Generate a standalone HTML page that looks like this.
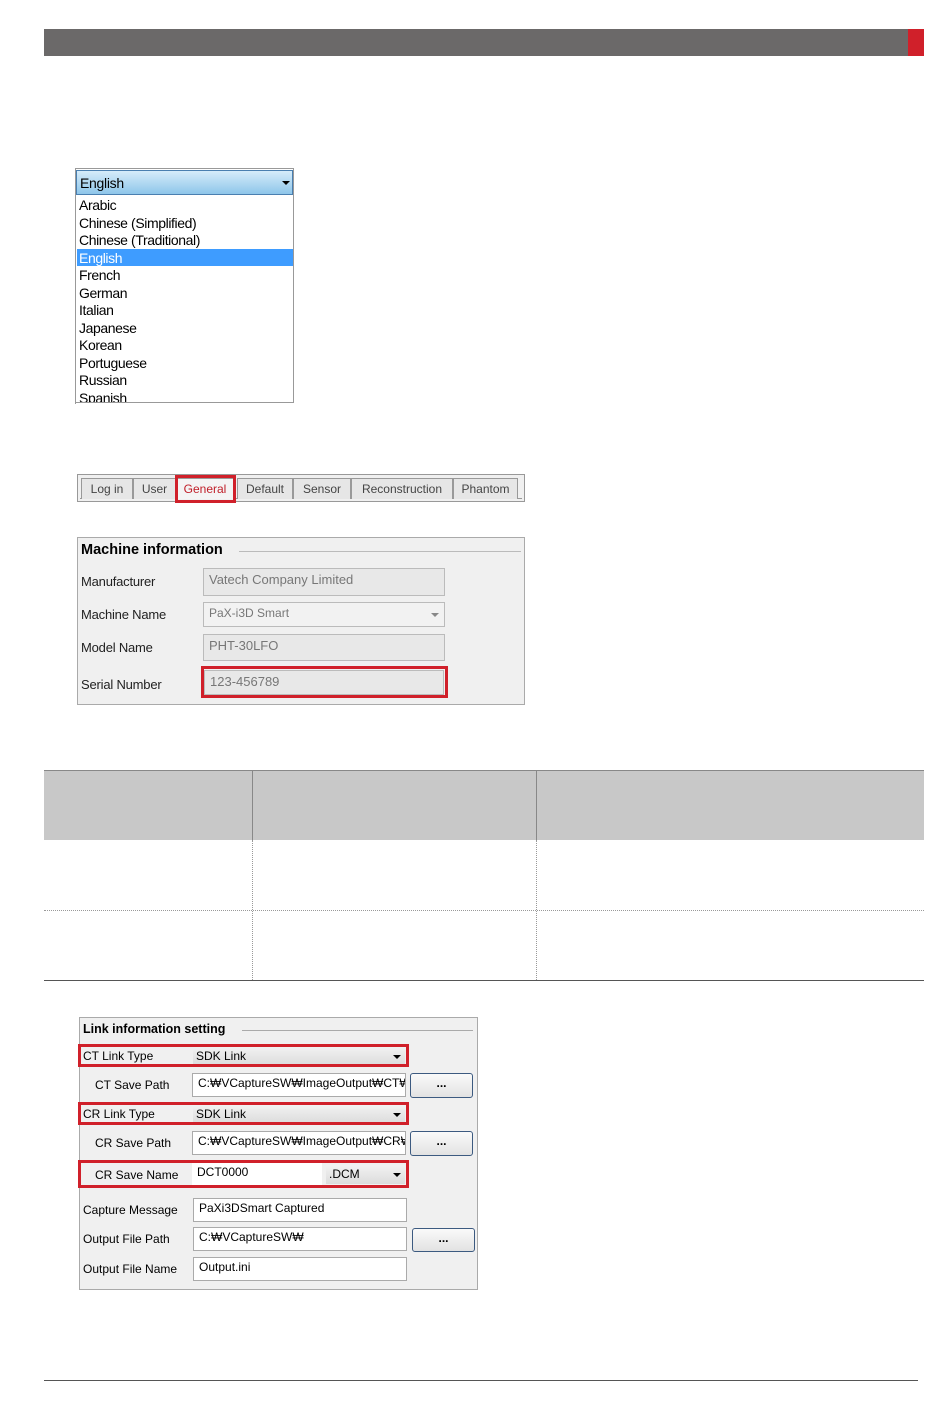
<!DOCTYPE html>
<html><head><meta charset="utf-8"><style>
body{margin:0;width:950px;height:1406px;background:#fff;position:relative;font-family:"Liberation Sans",sans-serif;overflow:hidden}
.a{position:absolute;box-sizing:border-box}
.t{position:absolute;white-space:nowrap}
.red{position:absolute;box-sizing:border-box;border:3px solid #d0202a}
.inp{position:absolute;box-sizing:border-box;background:#fff;border:1px solid #aaa;font-size:12px;padding:2px 0 0 5px;white-space:nowrap;overflow:hidden}
.dis{position:absolute;box-sizing:border-box;background:#e8e8e8;border:1px solid #bbb;font-size:13px;color:#777;padding:3px 0 0 5px}
.btn{position:absolute;box-sizing:border-box;border:1px solid #3c5a80;border-radius:3px;background:linear-gradient(#fafafa,#e2e2e2);font-size:12px;text-align:center;font-weight:bold;line-height:18px}
.cmb{position:absolute;box-sizing:border-box;background:linear-gradient(#f2f2f2,#dcdcdc);font-size:12px;padding:2px 0 0 3px}
.arr{position:absolute;width:0;height:0;border-left:4px solid transparent;border-right:4px solid transparent;border-top:4px solid #000}
.tab{position:absolute;top:478px;height:21px;border:1px solid #999;border-bottom:none;background:#e6e6e6;font-size:12px;color:#444;text-align:center;line-height:20px;box-sizing:border-box}
</style></head><body>
<div class="a" style="left:44px;top:29px;width:880px;height:27px;background:#6b6969"></div>
<div class="a" style="left:908px;top:29px;width:16px;height:27px;background:#d0202a"></div>

<div class="a" style="left:75px;top:168px;width:219px;height:236px;border:1px solid #999;background:#fff"></div>
<div class="a" style="left:76px;top:170px;width:217px;height:25px;background:linear-gradient(#d6ecfa,#8ec6ea);border:1px solid #4a7fb0"></div>
<div class="t" style="left:80px;top:175px;font-size:14px;letter-spacing:-0.3px">English</div>
<div class="arr" style="left:282px;top:181px"></div>
<div class="a" style="left:77px;top:249px;width:216px;height:17px;background:#3e9cff"></div>
<div class="t" style="left:79px;top:197px;font-size:14px;line-height:17.5px;letter-spacing:-0.4px">Arabic<br>Chinese (Simplified)<br>Chinese (Traditional)<br><span style="color:#fff">English</span><br>French<br>German<br>Italian<br>Japanese<br>Korean<br>Portuguese<br>Russian<br>Spanish</div>
<div class="a" style="left:76px;top:403px;width:218px;height:10px;background:#fff"></div>
<div class="a" style="left:75px;top:402px;width:219px;height:1px;background:#999"></div>

<div class="a" style="left:77px;top:474px;width:448px;height:28px;border:1px solid #999;background:#f0f0f0"></div>
<div class="a" style="left:80px;top:498px;width:442px;height:1px;background:#999"></div>
<div class="tab" style="left:81px;width:52px">Log in</div>
<div class="tab" style="left:133px;width:43px">User</div>
<div class="tab" style="left:176px;width:58px;color:#c0202a;background:#f4f4f4">General</div>
<div class="red" style="left:175px;top:475px;width:61px;height:28px"></div>
<div class="tab" style="left:237px;width:56px">Default</div>
<div class="tab" style="left:293px;width:58px">Sensor</div>
<div class="tab" style="left:351px;width:102px">Reconstruction</div>
<div class="tab" style="left:453px;width:65px">Phantom</div>

<div class="a" style="left:77px;top:537px;width:448px;height:168px;border:1px solid #aaa;background:#f0f0f0"></div>
<div class="t" style="left:81px;top:542px;font-size:14.5px;font-weight:bold">Machine information</div>
<div class="a" style="left:239px;top:551px;width:282px;height:1px;background:#bbb"></div>
<div class="t" style="left:81px;top:574px;font-size:13px;color:#222;letter-spacing:-0.2px">Manufacturer</div>
<div class="t" style="left:81px;top:607px;font-size:13px;color:#222;letter-spacing:-0.2px">Machine Name</div>
<div class="t" style="left:81px;top:640px;font-size:13px;color:#222;letter-spacing:-0.2px">Model Name</div>
<div class="t" style="left:81px;top:677px;font-size:13px;color:#222;letter-spacing:-0.2px">Serial Number</div>
<div class="dis" style="left:203px;top:568px;width:242px;height:28px">Vatech Company Limited</div>
<div class="dis" style="left:203px;top:602px;width:242px;height:25px;background:#f2f2f2;font-size:12px">PaX-i3D Smart</div>
<div class="arr" style="left:431px;top:613px;border-top-color:#888"></div>
<div class="dis" style="left:203px;top:634px;width:242px;height:27px">PHT-30LFO</div>
<div class="dis" style="left:204px;top:670px;width:240px;height:25px">123-456789</div>
<div class="red" style="left:201px;top:666px;width:247px;height:32px"></div>

<div class="a" style="left:44px;top:770px;width:880px;height:70px;background:#c8c8c8;border-top:1px solid #888"></div>
<div class="a" style="left:252px;top:770px;width:1px;height:70px;background:#888"></div>
<div class="a" style="left:536px;top:770px;width:1px;height:70px;background:#888"></div>
<div class="a" style="left:252px;top:840px;height:140px;border-left:1px dotted #999"></div>
<div class="a" style="left:536px;top:840px;height:140px;border-left:1px dotted #999"></div>
<div class="a" style="left:44px;top:910px;width:880px;border-top:1px dotted #999"></div>
<div class="a" style="left:44px;top:980px;width:880px;height:1px;background:#555"></div>

<div class="a" style="left:79px;top:1017px;width:399px;height:273px;border:1px solid #aaa;background:#f0f0f0"></div>
<div class="t" style="left:83px;top:1022px;font-size:12.5px;font-weight:bold">Link information setting</div>
<div class="a" style="left:242px;top:1030px;width:231px;height:1px;background:#aaa"></div>

<div class="t" style="left:83px;top:1049px;font-size:12px">CT Link Type</div>
<div class="cmb" style="left:193px;top:1047px;width:212px;height:18px">SDK Link</div><div class="arr" style="left:393px;top:1055px"></div>
<div class="red" style="left:78px;top:1044px;width:331px;height:23px"></div>
<div class="t" style="left:95px;top:1078px;font-size:12px">CT Save Path</div>
<div class="inp" style="left:192px;top:1073px;width:214px;height:24px">C:₩VCaptureSW₩ImageOutput₩CT₩</div>
<div class="btn" style="left:410px;top:1073px;width:63px;height:25px">...</div>

<div class="t" style="left:83px;top:1107px;font-size:12px">CR Link Type</div>
<div class="cmb" style="left:193px;top:1105px;width:212px;height:18px">SDK Link</div><div class="arr" style="left:393px;top:1113px"></div>
<div class="red" style="left:78px;top:1102px;width:331px;height:23px"></div>
<div class="t" style="left:95px;top:1136px;font-size:12px">CR Save Path</div>
<div class="inp" style="left:192px;top:1131px;width:214px;height:24px">C:₩VCaptureSW₩ImageOutput₩CR₩</div>
<div class="btn" style="left:410px;top:1131px;width:63px;height:25px">...</div>

<div class="t" style="left:95px;top:1168px;font-size:12px">CR Save Name</div>
<div class="inp" style="left:192px;top:1163px;width:130px;height:23px;border:none">DCT0000</div>
<div class="cmb" style="left:326px;top:1165px;width:79px;height:19px">.DCM</div><div class="arr" style="left:393px;top:1173px"></div>
<div class="red" style="left:78px;top:1160px;width:331px;height:28px"></div>

<div class="t" style="left:83px;top:1203px;font-size:12px">Capture Message</div>
<div class="inp" style="left:193px;top:1198px;width:214px;height:24px">PaXi3DSmart Captured</div>
<div class="t" style="left:83px;top:1232px;font-size:12px">Output File Path</div>
<div class="inp" style="left:193px;top:1227px;width:214px;height:24px">C:₩VCaptureSW₩</div>
<div class="btn" style="left:412px;top:1228px;width:63px;height:24px">...</div>
<div class="t" style="left:83px;top:1262px;font-size:12px">Output File Name</div>
<div class="inp" style="left:193px;top:1257px;width:214px;height:24px">Output.ini</div>

<div class="a" style="left:44px;top:1380px;width:874px;height:1px;background:#555"></div>
</body></html>
